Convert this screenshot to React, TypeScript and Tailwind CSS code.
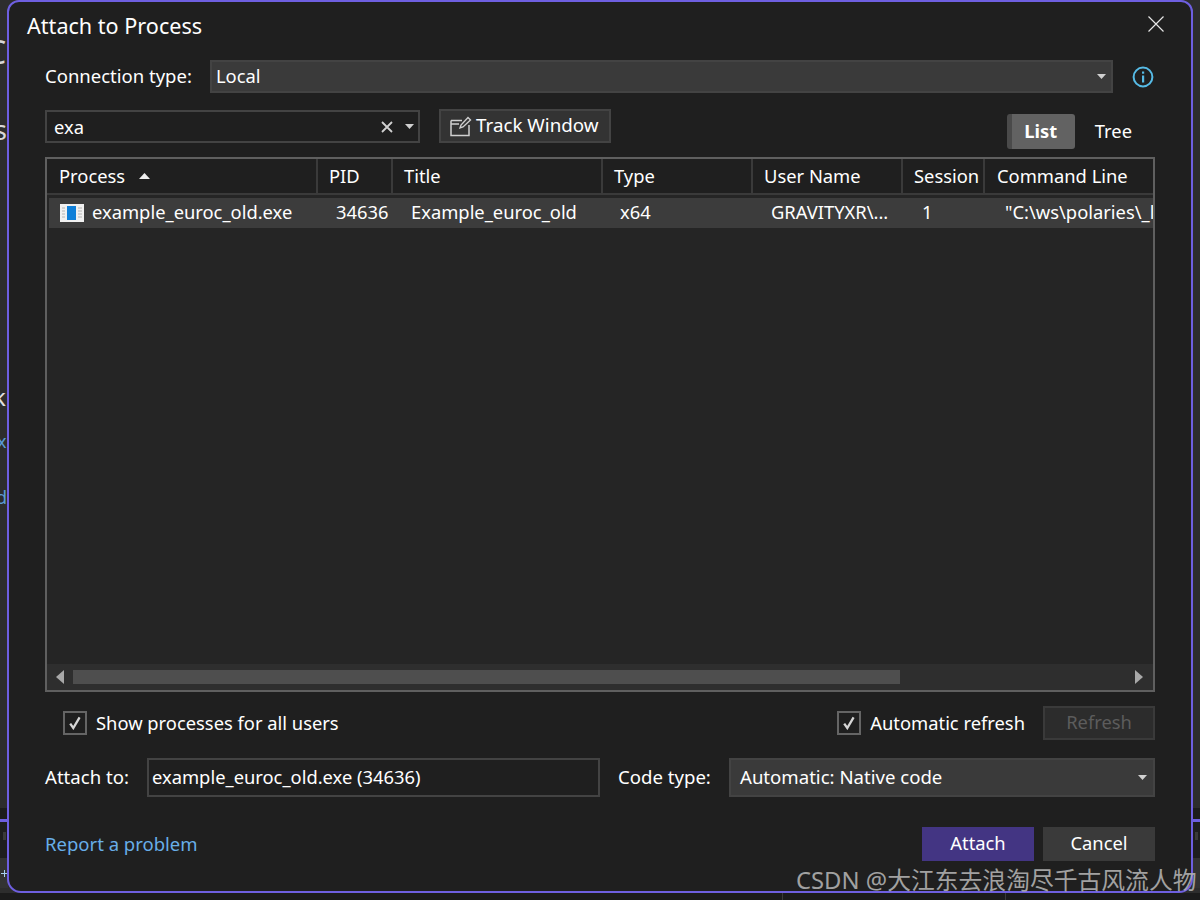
import React from 'react';

const columns = [
  { label: 'Process', cell: 'example_euroc_old.exe', width: 271, pad: 'pl-[12px]', cellPad: 'pl-[45px]' },
  { label: 'PID', cell: '34636', width: 75, pad: 'pl-[11px]', cellPad: 'pl-[18px]' },
  { label: 'Title', cell: 'Example_euroc_old', width: 210, pad: 'pl-[11px]', cellPad: 'pl-[18px]' },
  { label: 'Type', cell: 'x64', width: 150, pad: 'pl-[11px]', cellPad: 'pl-[17px]' },
  { label: 'User Name', cell: 'GRAVITYXR\\...', width: 150, pad: 'pl-[11px]', cellPad: 'pl-[18px]' },
  { label: 'Session', cell: '1', width: 82, pad: 'pl-[11px]', cellPad: 'pl-[19px]' },
  { label: 'Command Line', cell: '"C:\\ws\\polaries\\_l', width: 168, pad: 'pl-[12px]', cellPad: 'pl-[20px]' },
];

const Caret = () => (
  <svg width="9" height="5" viewBox="0 0 9 5" className="shrink-0">
    <path d="M0 0H9L4.5 5Z" fill="#d0d0d0" />
  </svg>
);

const Check: React.FC<{ label: string }> = ({ label }) => (
  <div className="flex items-center gap-[9px]">
    <div className="flex h-[24px] w-[24px] items-center justify-center border-2 border-[#656565]">
      <svg width="14" height="14" viewBox="0 0 14 14">
        <path d="M2.2 7.6 L5.3 12 L11.6 1.4" fill="none" stroke="#d6d6d6" strokeWidth="2.3" />
      </svg>
    </div>
    <span>{label}</span>
  </div>
);

const Backdrop = () => (
  <>
    <span className="absolute left-[-14px] top-[33px] text-[32px] leading-[38px] text-[#d8d8d8]">C</span>
    <span className="absolute left-[-6px] top-[113px] text-[27px] leading-[34px] text-[#d8d8d8]">s</span>
    <span className="absolute left-[-7px] top-[382px] text-[24px] leading-[30px] text-[#e0e0e0]">k</span>
    <span className="absolute left-[-3px] top-[429px] text-[18px] leading-[24px] text-[#5a9bd5]">x</span>
    <span className="absolute left-[-4px] top-[485px] text-[18px] leading-[24px] text-[#5a9bd5]">d</span>
    <div className="absolute left-0 top-[808px] h-[11px] w-[8px] bg-[#1c1c1c]" />
    <div className="absolute left-0 top-[819px] h-[3px] w-[8px] bg-[#6e5fe0]" />
    <div className="absolute left-0 top-[822px] h-[36px] w-[8px] bg-[#1e1e1e]" />
    <div className="absolute left-[3px] top-[832px] h-[8px] w-[3px] bg-[#3a3a3a]" />
    <div className="absolute left-0 top-[858px] h-[30px] w-[8px] bg-[#333333]" />
    <div className="absolute left-[1px] top-[873px] h-px w-[6px] bg-[#a8d0ee]" />
    <div className="absolute left-[4px] top-[870px] h-[7px] w-px bg-[#a8d0ee]" />
    <div className="absolute right-0 top-[808px] h-[11px] w-[8px] bg-[#1c1c1c]" />
    <div className="absolute right-0 top-[819px] h-[3px] w-[8px] bg-[#6e5fe0]" />
    <div className="absolute right-0 top-[822px] h-[36px] w-[8px] bg-[#1e1e1e]" />
    <div className="absolute right-[2px] top-[832px] h-[8px] w-[3px] bg-[#3a3a3a]" />
    <div className="absolute right-0 top-[858px] h-[30px] w-[8px] bg-[#333333]" />
    <div className="absolute bottom-0 left-0 h-[7px] w-full bg-[#1b1b1b]" />
    <div className="absolute bottom-0 left-[782px] h-[7px] w-px bg-[#3a3a3a]" />
    <div className="absolute bottom-0 left-[1005px] h-[7px] w-px bg-[#3a3a3a]" />
  </>
);

export default function App() {
  return (
    <div className="relative h-[900px] w-[1200px] overflow-hidden bg-[#2d2d2d] font-['Noto_Sans',sans-serif] text-[18.35px] text-white">
      <Backdrop />
      <div className="relative ml-[7px] flex h-[893px] w-[1186px] flex-col rounded-[14px] rounded-t-[12px] border-2 border-[#6e5fe0] bg-[#1f1f1f] pl-[36px] pr-[36px]">
        {/* title bar */}
        <div className="-ml-[18px] flex h-[48px] items-center justify-between">
          <span className="text-[21.6px] leading-none">Attach to Process</span>
          <svg width="16" height="16" viewBox="0 0 16 16" className="mr-[-9px] mt-[-4px]">
            <path d="M0.5 0.5 L15.5 15.5 M15.5 0.5 L0.5 15.5" stroke="#e6e6e6" strokeWidth="1.2" />
          </svg>
        </div>

        {/* connection type */}
        <div className="mt-[10px] flex h-[33px] items-center">
          <span className="mb-[2px] w-[165px] text-[18.5px]">Connection type:</span>
          <div className="flex h-full w-[903px] items-center justify-between border-2 border-[#434343] bg-[#3a3a3a] pl-[4px] pr-[5px]">
            <span className="mb-[2px]">Local</span>
            <Caret />
          </div>
          <svg width="22" height="22" viewBox="0 0 22 22" className="ml-[19px]">
            <circle cx="11" cy="11" r="9.4" fill="none" stroke="#56bbe6" strokeWidth="2" />
            <rect x="10" y="9.5" width="2.2" height="7" fill="#56bbe6" />
            <rect x="10" y="5.5" width="2.2" height="2.2" fill="#56bbe6" />
          </svg>
        </div>

        {/* filter row */}
        <div className="mt-[16px] flex h-[40px] items-start">
          <div className="mt-[1px] flex h-[33px] w-[375px] items-center border-2 border-[#434343] pl-[7px] pr-[4px]">
            <span className="flex-1">exa</span>
            <svg width="12" height="12" viewBox="0 0 12 12" className="mr-[12px]">
              <path d="M1 1 L11 11 M11 1 L1 11" stroke="#d0d0d0" strokeWidth="1.8" />
            </svg>
            <Caret />
          </div>
          <div className="ml-[19px] flex h-[34px] w-[172px] items-center border-2 border-[#434343] bg-[#333333] pb-[2px] pl-[9px] text-[18.8px]">
            <svg width="22" height="22" viewBox="0 0 22 22" className="mr-[4px] mt-[2px] shrink-0">
              <path d="M1 5.5H12M1 5.5V20.5H19V10M1 9H9" fill="none" stroke="#cfcfcf" strokeWidth="1.5" />
              <path d="M10 13 L11 10 L18 2.5 L20.5 5 L13 12 Z" fill="none" stroke="#cfcfcf" strokeWidth="1.4" />
            </svg>
            <span>Track Window</span>
          </div>
          <div className="ml-auto mr-[23px] mt-[5px] flex items-center gap-[20px]">
            <div className="flex h-[35px] w-[68px] items-center justify-center rounded-[3px] border-l-[5px] border-[#4a4a4a] bg-[#626262] pb-[2px] pr-[5px] font-bold">
              List
            </div>
            <span className="mb-[2px]">Tree</span>
          </div>
        </div>

        {/* process table */}
        <div className="mt-[8px] flex h-[535px] flex-col border-2 border-[#5f5f5f] bg-[#252525]">
          <div className="flex h-[36px] shrink-0 border-b-2 border-[#3a3a3a] bg-[#1f1f1f]">
            {columns.map((c, i) => (
              <div
                key={c.label}
                className={`flex shrink-0 items-center gap-[14px] border-r-2 border-[#3a3a3a] last:border-r-0 ${c.pad}`}
                style={{ width: c.width }}
              >
                <span className="whitespace-nowrap">{c.label}</span>
                {i === 0 && (
                  <svg width="11" height="6" viewBox="0 0 11 6">
                    <path d="M0 6H11L5.5 0Z" fill="#eeeeee" />
                  </svg>
                )}
              </div>
            ))}
          </div>
          <div className="flex min-h-0 flex-1 flex-col overflow-hidden pt-[3px]">
            <div className="ml-[2px] flex h-[30px] items-center overflow-hidden bg-[#3c3c3c]">
              {columns.map((c, i) => (
                <div
                  key={c.label}
                  className={`relative flex h-full shrink-0 items-center overflow-hidden whitespace-nowrap pb-[2px] ${i === 0 ? 'pl-[43px]' : c.cellPad}`}
                  style={{ width: i === 0 ? c.width - 2 : c.width }}
                >
                  {i === 0 && (
                    <svg width="24" height="18" viewBox="0 0 24 18" className="absolute left-[11px] top-[6px]">
                      <rect width="24" height="18" fill="#f0f0f0" />
                      <rect x="7" y="2" width="9" height="14" fill="#0f7fd8" />
                      <path d="M2 4H5M2 7H5M2 10H5M2 13H5M18 4H22M18 7H22M18 10H22M18 13H22" stroke="#b4b4b4" strokeWidth="1" />
                    </svg>
                  )}
                  {c.cell}
                </div>
              ))}
            </div>
            <div className="flex-1" />
            <div className="flex h-[26px] items-center bg-[#2e2e2e]">
              <svg width="10" height="14" viewBox="0 0 10 14" className="ml-[8px] shrink-0">
                <path d="M9 0V14L1 7Z" fill="#a8a8a8" />
              </svg>
              <div className="ml-[8px] h-[14px] w-[827px] bg-[#4e4e4e]" />
              <svg width="10" height="14" viewBox="0 0 10 14" className="ml-auto mr-[9px] shrink-0">
                <path d="M1 0V14L9 7Z" fill="#a8a8a8" />
              </svg>
            </div>
          </div>
        </div>

        {/* options */}
        <div className="mt-[14px] flex h-[34px] items-center pl-[18px]">
          <Check label="Show processes for all users" />
          <div className="ml-auto flex items-center">
            <Check label="Automatic refresh" />
            <div className="ml-[18px] flex h-[34px] w-[112px] items-center justify-center border-2 border-[#3a3a3a] bg-[#2c2c2c] pb-[2px] text-[#5c5c5c]">
              Refresh
            </div>
          </div>
        </div>

        {/* attach to / code type */}
        <div className="mt-[18px] flex h-[39px] items-center">
          <span className="mb-[2px] w-[102px] text-[18.6px]">Attach to:</span>
          <div className="flex h-full w-[453px] items-center border-2 border-[#434343] pb-[2px] pl-[3px]">
            example_euroc_old.exe (34636)
          </div>
          <span className="mb-[2px] ml-[18px] w-[111px] text-[18.6px]">Code type:</span>
          <div className="flex h-full flex-1 items-center justify-between border-2 border-[#434343] bg-[#3a3a3a] pl-[9px] pr-[6px]">
            <span className="mb-[2px] text-[18.6px]">Automatic: Native code</span>
            <Caret />
          </div>
        </div>

        {/* footer */}
        <div className="mt-[30px] flex h-[34px] items-center">
          <span className="text-[18.5px] text-[#68aee8]">Report a problem</span>
          <div className="ml-auto flex h-full w-[112px] items-center justify-center bg-[#433583] pb-[2px]">Attach</div>
          <div className="ml-[9px] flex h-full w-[112px] items-center justify-center bg-[#3a3a3a] pb-[2px]">Cancel</div>
        </div>
      </div>

      {/* watermark */}
      <span className="absolute left-[796px] top-[865px] whitespace-nowrap font-['Noto_Sans','Noto_Sans_CJK_SC',sans-serif] text-[23.8px] leading-[30px] text-[#b0b0b0] opacity-90">
        CSDN @大江东去浪淘尽千古风流人物
      </span>
    </div>
  );
}
